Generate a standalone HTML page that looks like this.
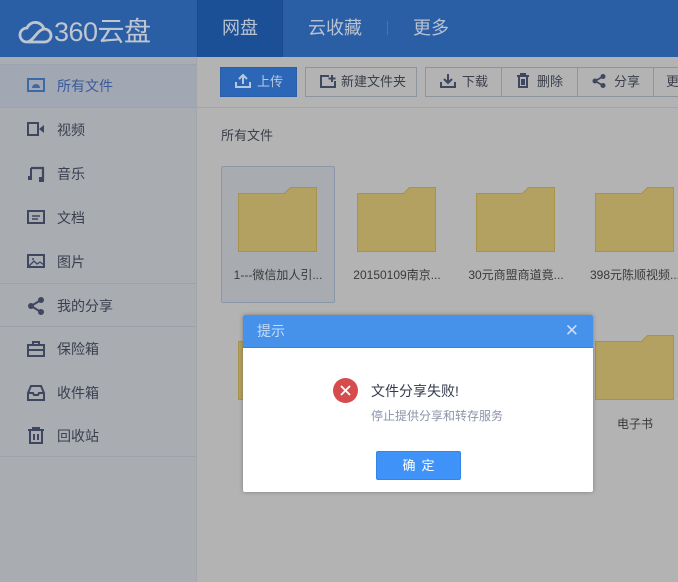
<!DOCTYPE html>
<html><head><meta charset="utf-8"><style>
*{margin:0;padding:0;box-sizing:border-box}
body{width:678px;height:582px;overflow:hidden;background:#b3b3b3;font-family:"Liberation Sans","Noto Sans CJK SC",sans-serif;position:relative}
.hd{position:absolute;left:0;top:0;width:678px;height:57px;background:#2a5ea5}
.logo{position:absolute;left:18px;top:10px;color:#c0c6d0;font-size:27px;letter-spacing:-0.5px}
.nav{position:absolute;top:0;height:57px;line-height:57px;color:#b8c2d0;font-size:18px;text-align:center}
.side{position:absolute;left:0;top:57px;width:197px;height:525px;background:#a9acb0;border-right:1px solid #a2a5a9}
.it{position:absolute;left:0;width:196px;height:44px;font-size:14px;color:#3a3f50;line-height:44px;padding-left:57px}
.it svg{position:absolute;left:27px;top:13px}
.sep{position:absolute;left:0;width:196px;height:1px;background:#9ea2a8}
.tb{position:absolute;top:67px;height:30px;border:1px solid #8e949c;font-size:13px;color:#3a3f4a;line-height:28px}
.fd{position:absolute;width:80px;height:65px}
.lbl{position:absolute;font-size:12px;color:#3a3a3a;width:114px;text-align:center}
</style></head><body>
<div class="hd">
<div class="logo"><svg width="36" height="26" viewBox="0 0 36 26" style="vertical-align:-4px"><path d="M9 23a7 7 0 0 1 0-14a9 9 0 0 1 17 1a6.5 6.5 0 0 1 1 13z M9 23c6 0 10-12 17-13" fill="none" stroke="#c0c6d0" stroke-width="2.8"/></svg>360云盘</div>
<div class="nav" style="left:197px;width:86px;background:#1b4f96;border-left:1px solid #1a4a8c;border-right:1px solid #1a4a8c">网盘</div>
<div class="nav" style="left:290px;width:90px">云收藏</div>
<div style="position:absolute;left:387px;top:21px;width:1px;height:14px;background:#4a72ad"></div>
<div class="nav" style="left:395px;width:72px">更多</div>
</div>
<div class="side">
<div style="position:absolute;left:0;top:7px;width:196px;height:44px;background:#a1a8b3;border-top:1px solid #9aa3b0;border-bottom:1px solid #9aa3b0"></div>
</div>
<div class="it" style="top:64px;color:#3b5a9a"><svg width="18" height="16"><rect x="1" y="2" width="16" height="12" fill="none" stroke="#3b6aa8" stroke-width="2"/><path d="M5 11h8a3 3 0 0 0-8 0z" fill="#3b6aa8"/></svg>所有文件</div>
<div class="it" style="top:108px"><svg width="18" height="16"><rect x="1" y="2" width="10" height="12" fill="none" stroke="#3e4660" stroke-width="2"/><path d="M12 8l5-4v8z" fill="#3e4660"/></svg>视频</div>
<div class="it" style="top:152px"><svg width="18" height="18"><path d="M4 3h12v12" fill="none" stroke="#3e4660" stroke-width="2.2"/><path d="M4 3v11" stroke="#3e4660" stroke-width="2"/><rect x="1" y="11" width="4" height="4" fill="#3e4660"/><rect x="12" y="12" width="5" height="5" fill="#3e4660"/></svg>音乐</div>
<div class="it" style="top:196px"><svg width="18" height="16"><rect x="1" y="2" width="16" height="12" fill="none" stroke="#3e4660" stroke-width="2"/><path d="M5 7h8M5 10h6" stroke="#3e4660" stroke-width="1.6"/></svg>文档</div>
<div class="it" style="top:240px"><svg width="18" height="16"><rect x="1" y="2" width="16" height="12" fill="none" stroke="#3e4660" stroke-width="2"/><path d="M2 13l5-5 3 3 3-2 4 3" fill="none" stroke="#3e4660" stroke-width="1.3"/><circle cx="6" cy="6" r="1" fill="#3e4660"/></svg>图片</div>
<div class="sep" style="top:283px"></div>
<div class="it" style="top:284px"><svg width="18" height="18"><circle cx="14" cy="3" r="3" fill="#3e4660"/><circle cx="4" cy="9" r="3" fill="#3e4660"/><circle cx="14" cy="15" r="3" fill="#3e4660"/><path d="M14 3L4 9l10 6" fill="none" stroke="#3e4660" stroke-width="2"/></svg>我的分享</div>
<div class="sep" style="top:326px"></div>
<div class="it" style="top:327px"><svg width="18" height="18"><rect x="1" y="5" width="16" height="11" fill="none" stroke="#3e4660" stroke-width="2"/><path d="M6 5V2h6v3M1 10h16" fill="none" stroke="#3e4660" stroke-width="2"/></svg>保险箱</div>
<div class="it" style="top:371px"><svg width="18" height="18"><path d="M1 9l3-7h10l3 7v7H1z M1 9h5l1 2h4l1-2h5" fill="none" stroke="#3e4660" stroke-width="2"/></svg>收件箱</div>
<div class="it" style="top:414px"><svg width="18" height="18"><path d="M1 3h16M6 3V1h6v2M3 3v13h12V3M7 7v6M11 7v6" fill="none" stroke="#3e4660" stroke-width="2"/></svg>回收站</div>
<div class="sep" style="top:456px"></div>
<div style="position:absolute;left:197px;top:107px;width:481px;height:1px;background:#a4a4a4"></div>
<div class="tb" style="left:220px;width:77px;background:#2b66b7;border-color:#2a5fa8;color:#b8c8dc;padding-left:14px"><svg width="16" height="15" style="vertical-align:-2px;margin-right:6px"><path d="M8 11V2M4 6l4-4 4 4M1 9v5h14V9" fill="none" stroke="#b8c8dc" stroke-width="2"/></svg>上传</div>
<div class="tb" style="left:305px;width:112px;padding-left:14px"><svg width="16" height="14" style="vertical-align:-2px;margin-right:5px"><path d="M9 2H1v11h14V7" fill="none" stroke="#3e4660" stroke-width="2"/><path d="M12 1v7M8.5 4.5h7" stroke="#3e4660" stroke-width="2"/></svg>新建文件夹</div>
<div class="tb" style="left:425px;width:77px;padding-left:14px"><svg width="16" height="15" style="vertical-align:-2px;margin-right:6px"><path d="M8 1v9M4 6l4 4 4-4M1 9v5h14V9" fill="none" stroke="#3e4660" stroke-width="2"/></svg>下载</div>
<div class="tb" style="left:501px;width:77px;padding-left:14px"><svg width="14" height="15" style="vertical-align:-2px;margin-right:7px"><path d="M1 3h12M5 3V1h4v2M3 3v11h8V3M6 6v6M8 6v6" fill="none" stroke="#3e4660" stroke-width="2"/></svg>删除</div>
<div class="tb" style="left:577px;width:77px;padding-left:14px"><svg width="14" height="14" style="vertical-align:-2px;margin-right:8px"><circle cx="11" cy="2.5" r="2.5" fill="#3e4660"/><circle cx="3" cy="7" r="2.5" fill="#3e4660"/><circle cx="11" cy="11.5" r="2.5" fill="#3e4660"/><path d="M11 2.5L3 7l8 4.5" fill="none" stroke="#3e4660" stroke-width="1.6"/></svg>分享</div>
<div class="tb" style="left:653px;width:40px;padding-left:12px">更</div>
<div style="position:absolute;left:221px;top:125px;font-size:13px;color:#3a3f4a">所有文件</div>
<div style="position:absolute;left:221px;top:166px;width:114px;height:137px;background:#a8abb0;border:1px solid #8b97a8;border-radius:2px"></div>
<svg style="position:absolute;left:0;top:0" width="678" height="582">
<defs><path id="f" d="M0.5 6.5h46l6-6h26v64h-78z" fill="#b2a160" stroke="#a8924c"/></defs>
<use href="#f" x="238" y="187"/><use href="#f" x="357" y="187"/><use href="#f" x="476" y="187"/><use href="#f" x="595" y="187"/>
<use href="#f" x="238" y="335"/><use href="#f" x="595" y="335"/>
</svg>
<div class="lbl" style="left:221px;top:266px">1---微信加人引...</div>
<div class="lbl" style="left:340px;top:266px">20150109南京...</div>
<div class="lbl" style="left:459px;top:266px">30元商盟商道竟...</div>
<div class="lbl" style="left:578px;top:266px">398元陈顺视频...</div>
<div class="lbl" style="left:578px;top:415px">电子书</div>
<div style="position:absolute;left:243px;top:315px;width:350px;height:177px;background:#fff;border-radius:2px;box-shadow:0 0 4px rgba(0,0,0,.3)">
<div style="height:33px;background:#4691ea;border-bottom:1px solid #3a82d8;color:#c8dcf5;font-size:14px;line-height:32px;padding-left:14px;border-radius:2px 2px 0 0">提示<span style="position:absolute;right:14px;top:0;font-size:17px;color:#c8dcf5">✕</span></div>
<svg style="position:absolute;left:90px;top:63px" width="25" height="25"><circle cx="12.5" cy="12.5" r="12.5" fill="#d64b4b"/><path d="M8 8l9 9M17 8l-9 9" stroke="#fff" stroke-width="1.8"/></svg>
<div style="position:absolute;left:128px;top:66px;font-size:14px;color:#333a4c">文件分享失败!</div>
<div style="position:absolute;left:128px;top:92px;font-size:12px;color:#8a93a8">停止提供分享和转存服务</div>
<div style="position:absolute;left:133px;top:136px;width:85px;height:29px;background:#3f93f8;border:1px solid #3585e6;border-radius:2px;color:#fff;font-size:13px;text-align:center;line-height:27px;letter-spacing:6px;padding-left:6px">确定</div>
</div>
</body></html>
